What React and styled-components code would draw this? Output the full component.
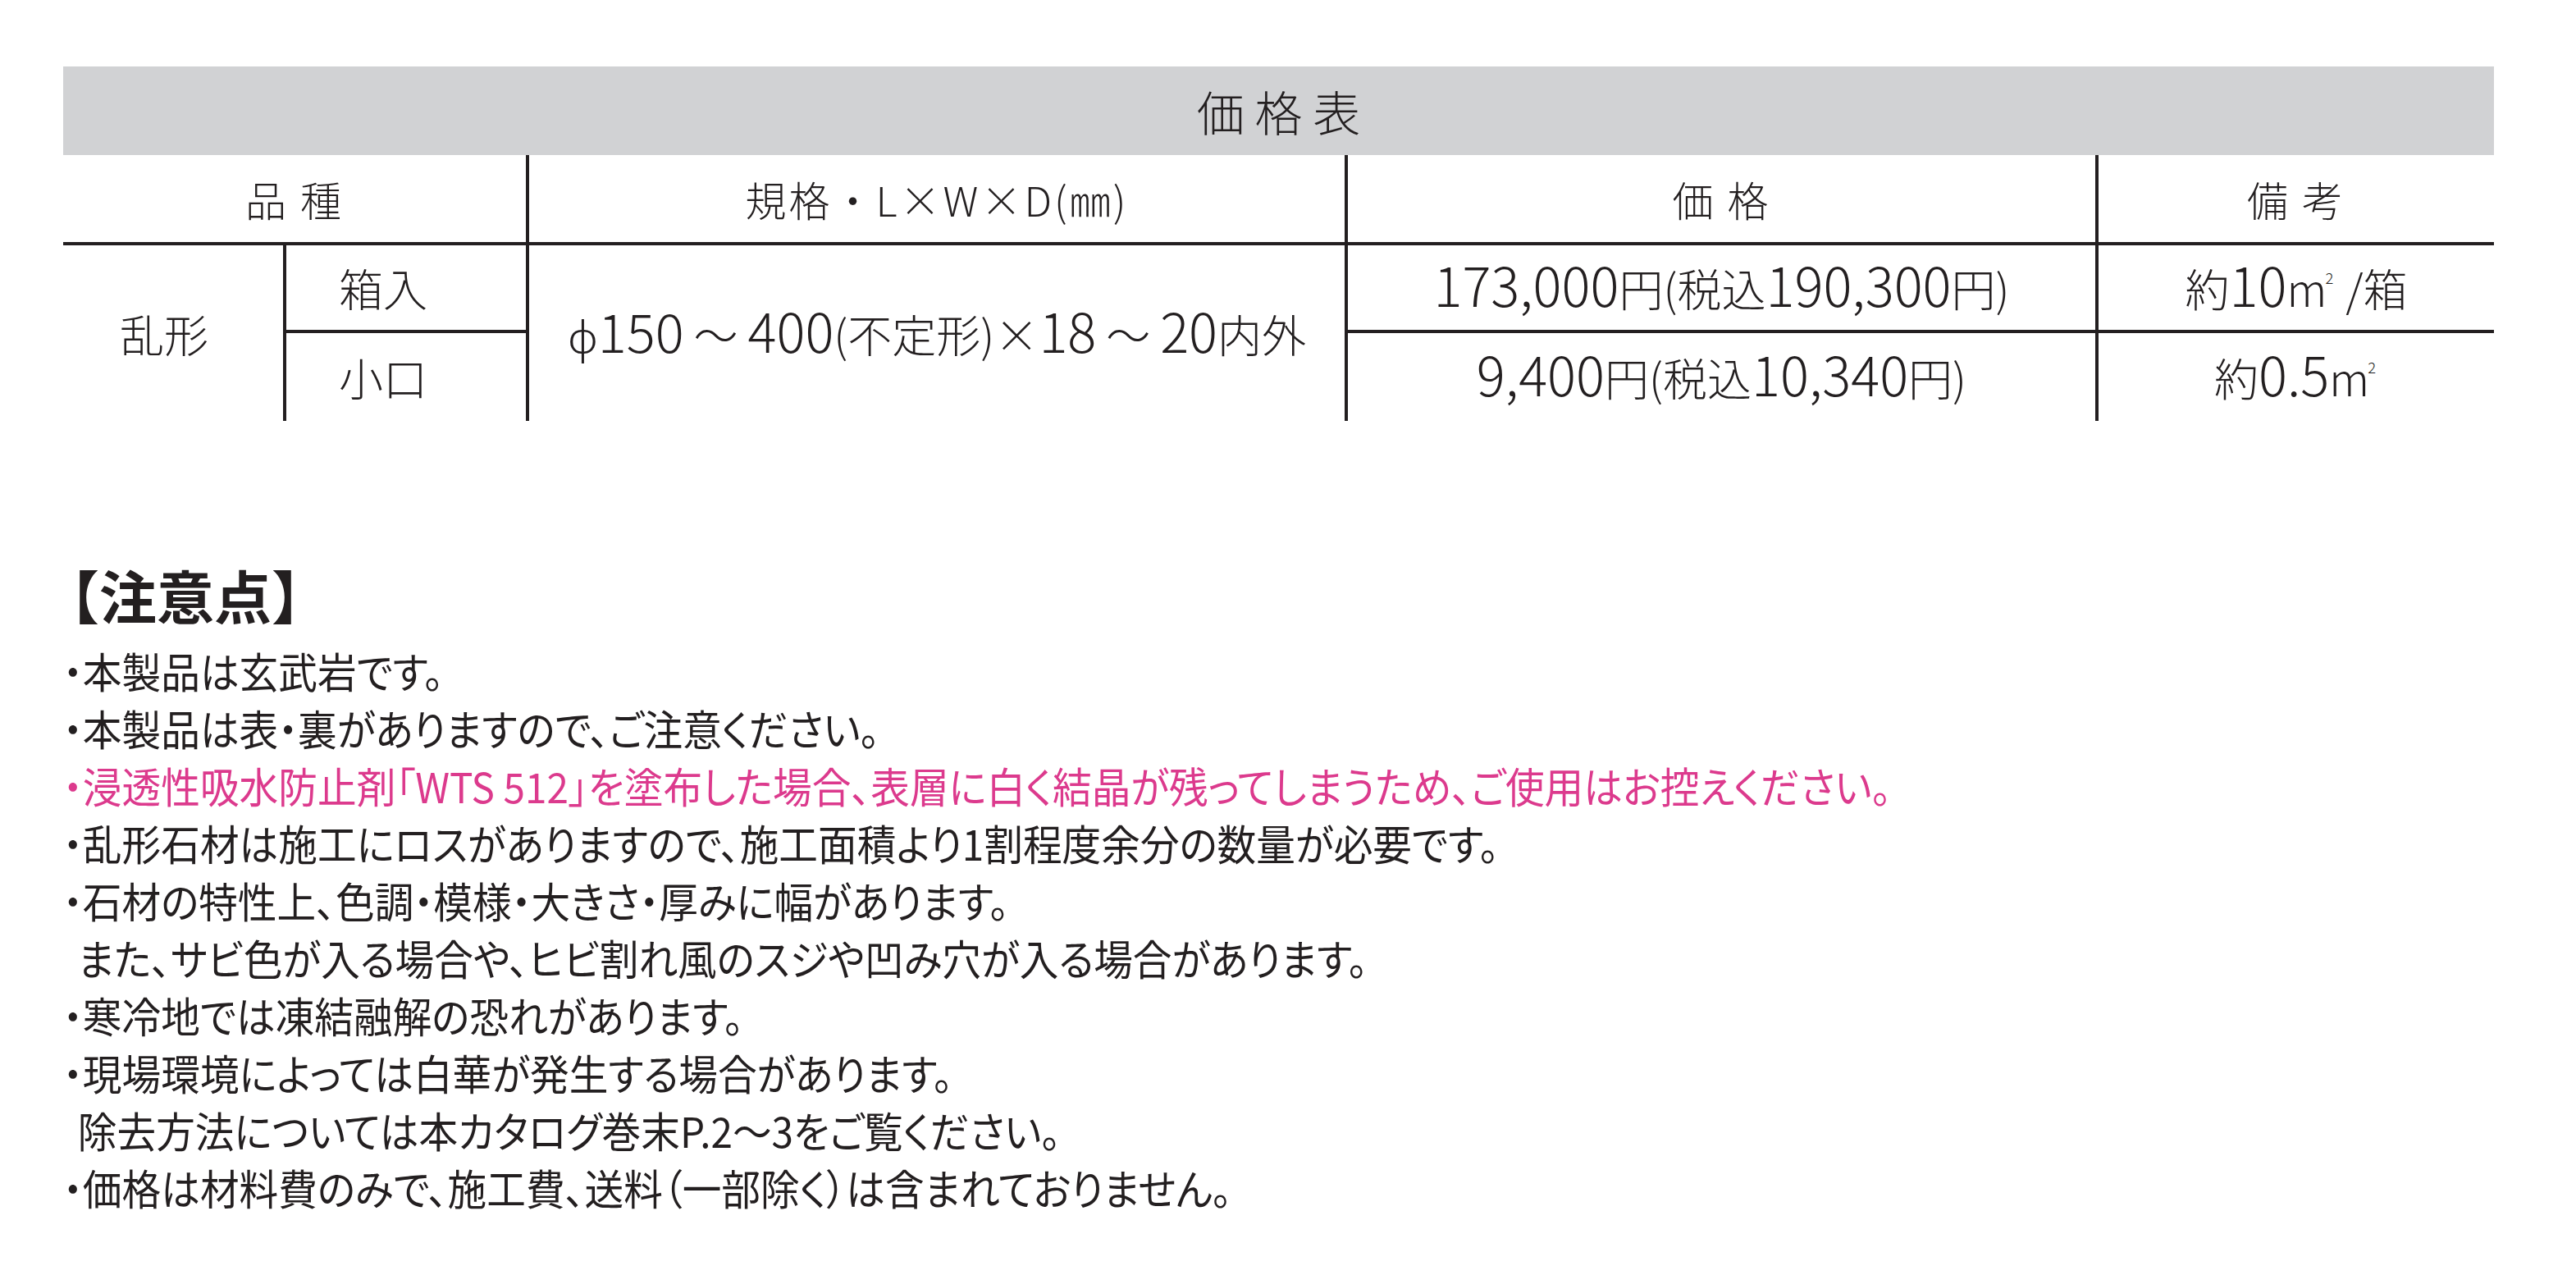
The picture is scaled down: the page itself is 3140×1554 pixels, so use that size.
import React from 'react';
import styled, {createGlobalStyle} from 'styled-components';

const GlobalStyle = createGlobalStyle`
  body {
    margin: 0;
    background: #ffffff;
    color: #231f20;
    font-family: "Noto Sans CJK JP", "Noto Sans", sans-serif;
  }
`;

const Page = styled.div`
  width: 2963px;
  padding: 81px 0 60px 77px;
`;

// 価格表: 5列のグリッド、罫線はセルの上・左ボーダーで描く
const PriceGrid = styled.div`
  display: grid;
  grid-template-columns: 268px 296px 998px 915px 486px;
  grid-template-rows: 108px 106px 107px 111px;
  font-weight: 300;
`;

const Title = styled.div`
  grid-column: 1 / -1;
  background: #d1d2d4;
  display: flex;
  align-items: center;
  justify-content: center;
  font-size: 58px;
  letter-spacing: 0.22em;
  padding-left: 0.22em;
`;

const CellBox = styled.div`
  grid-column: ${({$col}) => $col};
  grid-row: ${({$row}) => $row};
  display: flex;
  align-items: center;
  justify-content: center;
  font-size: ${({$head}) => ($head ? '50px' : '54px')};
  letter-spacing: ${({$head}) => ($head ? '0.06em' : '0')};
  border-left: ${({$left}) => ($left ? '4px solid #231f20' : 'none')};
  border-top: ${({$top}) => ($top ? '4px solid #231f20' : 'none')};
  padding-right: ${({$shift}) => $shift || 0}px;
  white-space: pre;
`;

// 中身は1つのspanにまとめて空白が消えないようにする
const Cell = ({children, ...props}) => (
  <CellBox {...props}>
    <span>{children}</span>
  </CellBox>
);

// 数字は本文の漢字より大きめの字面
const Num = styled.span`
  font-size: 1.21em;
  line-height: 1;
`;

const Sup = styled.span`
  display: inline-block;
  font-size: 0.34em;
  transform: translate(-0.1em, -1.55em);
  width: 0.6em;
`;

const Notes = styled.div`
  margin-top: 177px;
`;

const Heading = styled.h2`
  margin: 0 0 22px -26px;
  font-size: 70px;
  line-height: 70px;
  font-weight: 700;
`;

const Line = styled.p`
  margin: 0;
  font-size: 51px;
  line-height: 70px;
  font-feature-settings: "palt";
  white-space: nowrap;
  transform: scaleX(0.935);
  transform-origin: left center;
  color: ${({$accent}) => ($accent ? '#dc3a8d' : '#231f20')};
  padding-left: ${({$indent}) => ($indent ? '19px' : '0')};
`;

const M2 = () => (
  <>
    m<Sup>2</Sup>
  </>
);

const notes = [
  {text: '・本製品は玄武岩です。'},
  {text: '・本製品は表・裏がありますので、ご注意ください。'},
  {text: '・浸透性吸水防止剤「WTS 512」を塗布した場合、表層に白く結晶が残ってしまうため、ご使用はお控えください。', accent: true},
  {text: '・乱形石材は施工にロスがありますので、施工面積より1割程度余分の数量が必要です。'},
  {text: '・石材の特性上、色調・模様・大きさ・厚みに幅があります。'},
  {text: 'また、サビ色が入る場合や、ヒビ割れ風のスジや凹み穴が入る場合があります。', indent: true},
  {text: '・寒冷地では凍結融解の恐れがあります。'},
  {text: '・現場環境によっては白華が発生する場合があります。'},
  {text: '除去方法については本カタログ巻末P.2〜3をご覧ください。', indent: true},
  {text: '・価格は材料費のみで、施工費、送料（一部除く）は含まれておりません。'},
];

const App = () => {
  return (
    <Page>
      <GlobalStyle />
      <PriceGrid>
        <Title>価格表</Title>

        <Cell $col="1 / 3" $row="2" $head>品 種</Cell>
        <Cell $col="3" $row="2" $left $head>規格・L×W×D(㎜)</Cell>
        <Cell $col="4" $row="2" $left $head>価 格</Cell>
        <Cell $col="5" $row="2" $left $head>備 考</Cell>

        <Cell $col="1" $row="3 / 5" $top $shift={22}>乱形</Cell>
        <Cell $col="2" $row="3" $top $left $shift={56}>箱入</Cell>
        <Cell $col="3" $row="3 / 5" $top $left>
          ϕ<Num>150</Num>{' 〜 '}<Num>400</Num>(不定形)×<Num>18</Num>{' 〜 '}<Num>20</Num>内外
        </Cell>
        <Cell $col="4" $row="3" $top $left>
          <Num>173,000</Num>円(税込<Num>190,300</Num>円)
        </Cell>
        <Cell $col="5" $row="3" $top $left>
          約<Num>10</Num><M2 />{' /箱'}
        </Cell>

        <Cell $col="2" $row="4" $top $left $shift={56}>小口</Cell>
        <Cell $col="4" $row="4" $top $left>
          <Num>9,400</Num>円(税込<Num>10,340</Num>円)
        </Cell>
        <Cell $col="5" $row="4" $top $left>
          約<Num>0.5</Num><M2 />
        </Cell>
      </PriceGrid>

      <Notes>
        <Heading>【注意点】</Heading>
        {notes.map((n, i) => (
          <Line key={i} $accent={n.accent} $indent={n.indent}>{n.text}</Line>
        ))}
      </Notes>
    </Page>
  );
};

export default App;
